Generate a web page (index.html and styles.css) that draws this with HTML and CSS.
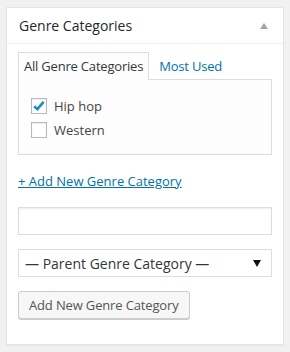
FILE: index.html
```html
<!DOCTYPE html>
<html>
<head>
<meta charset="utf-8">
<link rel="stylesheet" href="styles.css">
</head>
<body>
<div class="postbox">
  <div class="hndle">
    <h2 class="title">Genre Categories</h2>
    <span class="toggle"></span>
  </div>
  <div class="inside">
    <ul class="tabs">
      <li class="tab active">All Genre Categories</li>
      <li class="tab"><a href="#">Most Used</a></li>
    </ul>
    <div class="panel">
      <ul class="checklist">
        <li><span class="cb checked"><svg viewBox="0 0 16 16" width="16" height="16"><path d="M3.2 8.2 L6.4 11.2 L12.6 3.8" fill="none" stroke="#1e8cbe" stroke-width="2.6" stroke-linecap="butt"/></svg></span>Hip hop</li>
        <li><span class="cb"></span>Western</li>
      </ul>
    </div>
    <a class="add-link" href="#">+ Add New Genre Category</a>
    <div class="field field-first"><span class="input"></span></div>
    <div class="field"><span class="select"><span>— Parent Genre Category —</span><span class="arrow"></span></span></div>
    <div class="field"><span class="button">Add New Genre Category</span></div>
  </div>
</div>
</body>
</html>
```

FILE: styles.css
```css
* { box-sizing: border-box; }
html, body { margin: 0; padding: 0; }
body {
  background: #f1f1f1;
  font-family: "Open Sans", "Liberation Sans", sans-serif;
  font-size: 13px;
  color: #444;
  padding: 7px 6px 8px 6px;
}
.postbox {
  background: #fff;
  border: 1px solid #e5e5e5;
  box-shadow: 0 1px 1px rgba(0,0,0,0.04);
  height: 338px;
}
.hndle {
  display: flex;
  align-items: center;
  justify-content: space-between;
  height: 36px;
  border-bottom: 1px solid #eee;
  padding: 0 15px 0 12px;
}
.title {
  margin: 0;
  font-size: 14px;
  font-weight: 400;
  color: #23282d;
  line-height: 1.4;
  padding-top: 1px;
}
.toggle {
  width: 0; height: 0;
  border-left: 4px solid transparent;
  border-right: 4px solid transparent;
  border-bottom: 6px solid #a0a5aa;
  margin-top: 1px;
}
.inside {
  padding: 8px 11px 0 11px;
}
.tabs {
  list-style: none;
  margin: 0;
  padding: 0;
  display: flex;
  height: 28px;
  position: relative;
  z-index: 1;
}
.tab {
  padding: 4px 5px 5px 5px;
  line-height: 18px;
  border: 1px solid transparent;
  border-bottom: none;
  letter-spacing: -0.2px;
}
.tab.active {
  border-color: #ddd;
  background: #fdfdfd;
  color: #32373c;
  height: 28px;
}
.tab a {
  color: #0073aa;
  text-decoration: none;
  padding-left: 4px;
}
.panel {
  border: 1px solid #ddd;
  background: #fdfdfd;
  height: 76px;
  margin-top: -1px;
}
.checklist {
  list-style: none;
  margin: 0;
  padding: 18px 0 0 12px;
}
.checklist li {
  display: flex;
  align-items: center;
  height: 16px;
  margin-bottom: 8px;
  color: #444;
  line-height: 16px;
}
.cb {
  width: 16px; height: 16px;
  border: 1px solid #b4b9be;
  background: #fff;
  box-shadow: inset 0 1px 2px rgba(0,0,0,0.07);
  margin-right: 7px;
  position: relative;
  flex: none;
}
.cb svg { position: absolute; left: -1px; top: -1px; }
.add-link {
  display: inline-block;
  margin-top: 17px;
  color: #0073aa;
  text-decoration: underline;
  line-height: 18px;
  font-size: 13px;
}
.field { margin-top: 14px; }
.field-first { margin-top: 17px; }
.input {
  display: block;
  height: 28px;
  border: 1px solid #ddd;
  background: #fff;
  box-shadow: inset 0 1px 2px rgba(0,0,0,0.07);
}
.select {
  display: flex;
  align-items: center;
  justify-content: space-between;
  height: 28px;
  border: 1px solid #ddd;
  background: #fff;
  padding: 0 10px 0 6px;
  font-size: 14px;
  color: #32373c;
}
.arrow {
  width: 0; height: 0;
  border-left: 4px solid transparent;
  border-right: 4px solid transparent;
  border-top: 7px solid #111;
}
.button {
  display: inline-flex;
  align-items: center;
  height: 28px;
  padding: 0 10px;
  border: 1px solid #ccc;
  border-radius: 3px;
  background: #f7f7f7;
  box-shadow: 0 1px 0 #ccc;
  color: #555;
  font-size: 13px;
  letter-spacing: -0.15px;
}
```
